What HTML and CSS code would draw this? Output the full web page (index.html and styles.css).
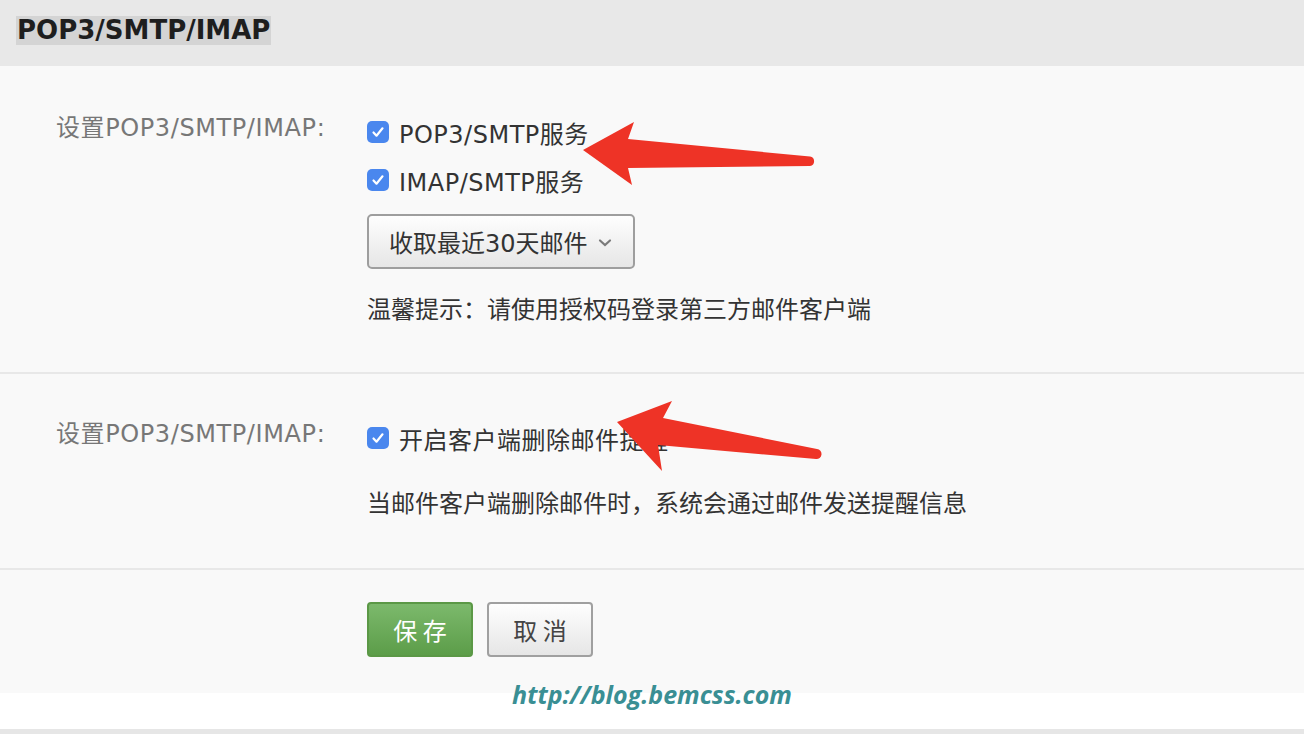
FILE: index.html
```html
<!DOCTYPE html>
<html lang="zh-CN">
<head>
    <meta charset="UTF-8">
    <meta name="viewport" content="width=device-width, initial-scale=1.0">
    <title>POP3/SMTP/IMAP</title>
    <link rel="stylesheet" href="styles.css">
</head>
<body>
    <div class="mail">
        <div class="mail__head">
            <span class="mail__title">POP3/SMTP/IMAP</span>
        </div>

        <div class="mail__panel">
            <div class="mail__section mail__section--first">
                <div class="mail__label">设置POP3/SMTP/IMAP:</div>
                <div class="mail__controls">
                    <label class="mail__check"><span class="mail__box"><svg viewBox="0 0 22 22" width="22" height="22"><path d="M6.5 11.5l3 3.2 6-7.4" fill="none" stroke="#fff" stroke-width="2.2" stroke-linecap="round" stroke-linejoin="round"/></svg></span>POP3/SMTP服务</label>
                    <label class="mail__check"><span class="mail__box"><svg viewBox="0 0 22 22" width="22" height="22"><path d="M6.5 11.5l3 3.2 6-7.4" fill="none" stroke="#fff" stroke-width="2.2" stroke-linecap="round" stroke-linejoin="round"/></svg></span>IMAP/SMTP服务</label>
                    <div class="mail__select">
                        <span>收取最近30天邮件</span>
                        <svg class="mail__chevron" viewBox="0 0 14 10" width="14" height="10"><path d="M2 2.5l5 4.5 5-4.5" fill="none" stroke="#7a7a7a" stroke-width="2.2" stroke-linecap="round"/></svg>
                    </div>
                    <p class="mail__hint">温馨提示：请使用授权码登录第三方邮件客户端</p>
                </div>
            </div>

            <div class="mail__section mail__section--second">
                <div class="mail__label">设置POP3/SMTP/IMAP:</div>
                <div class="mail__controls">
                    <label class="mail__check"><span class="mail__box"><svg viewBox="0 0 22 22" width="22" height="22"><path d="M6.5 11.5l3 3.2 6-7.4" fill="none" stroke="#fff" stroke-width="2.2" stroke-linecap="round" stroke-linejoin="round"/></svg></span>开启客户端删除邮件提醒</label>
                    <p class="mail__hint mail__hint--spaced">当邮件客户端删除邮件时，系统会通过邮件发送提醒信息</p>
                </div>
            </div>

            <div class="mail__section mail__section--actions">
                <div class="mail__label"></div>
                <div class="mail__buttons">
                    <button class="mail__btn mail__btn--save">保 存</button>
                    <button class="mail__btn mail__btn--cancel">取 消</button>
                </div>
            </div>
        </div>

        <div class="mail__foot"></div>

        <div class="mail__mark">http://blog.bemcss.com</div>

        <svg class="mail__arrows" viewBox="0 0 1304 734" width="1304" height="734">
            <path d="M583 150 L634 122 L628 139 L810 156.5 A4.8 4.8 0 0 1 810 166 L628 168 L632 185 Z" fill="#ee3326"/>
            <path d="M617 422 L672 401 L663 418 L817 449 A5 5 0 0 1 816 459 L658 445 L662 471 Z" fill="#ee3326"/>
        </svg>
    </div>
</body>
</html>
```

FILE: styles.css
```css
body {
    margin: 0;
    background: #fff;
    font-family: "DejaVu Sans", "Noto Sans CJK SC", sans-serif;
}
.mail {
    position: relative;
    width: 1304px;
    height: 734px;
    overflow: hidden;
}
.mail__head {
    height: 66px;
    background: #e8e8e8;
    padding: 16px 0 0 16px;
    box-sizing: border-box;
}
.mail__title {
    display: inline-block;
    background: #d4d4d4;
    color: #1e1e1e;
    font-weight: bold;
    font-size: 26px;
    line-height: 29px;
    padding: 0 1px;
}
.mail__panel {
    background: #f9f9f9;
}
.mail__section {
    display: flex;
    border-bottom: 2px solid #e8e8e8;
}
.mail__section--first {
    padding: 42px 0 0;
    height: 308px;
    box-sizing: border-box;
}
.mail__section--second {
    padding: 40px 0 0;
    height: 196px;
    box-sizing: border-box;
}
.mail__section--actions {
    border-bottom: 0;
    padding: 32px 0 36px;
}
.mail__label {
    width: 367px;
    padding-left: 56px;
    box-sizing: border-box;
    flex-shrink: 0;
    color: #777;
    font-size: 24px;
    line-height: 40px;
    letter-spacing: 0.6px;
}
.mail__controls {
    display: flex;
    flex-direction: column;
    align-items: flex-start;
}
.mail__check {
    display: flex;
    align-items: center;
    gap: 10px;
    height: 48px;
    color: #333;
    font-size: 24px;
    letter-spacing: 0.5px;
}
.mail__box {
    width: 22px;
    height: 22px;
    border-radius: 5px;
    background: #4a87ee;
    display: flex;
}
.mail__select {
    margin-top: 10px;
    width: 268px;
    height: 55px;
    box-sizing: border-box;
    border: 2px solid #9e9e9e;
    border-radius: 5px;
    background: linear-gradient(#fefefe, #e6e6e6);
    display: flex;
    align-items: center;
    padding: 0 21px 0 20px;
    justify-content: space-between;
    color: #333;
    font-size: 24px;
}
.mail__chevron {
    margin-top: 2px;
}
.mail__hint {
    margin: 27px 0 0;
    color: #333;
    font-size: 24px;
    line-height: 28px;
}
.mail__hint--spaced {
    margin-top: 28px;
}
.mail__buttons {
    display: flex;
    gap: 14px;
}
.mail__btn {
    width: 106px;
    height: 55px;
    border-radius: 4px;
    font-family: "Noto Sans CJK SC", sans-serif;
    font-size: 24px;
    cursor: pointer;
}
.mail__btn--save {
    background: linear-gradient(#7cb96c, #5c9d49);
    border: 2px solid #5b9846;
    color: #fff;
}
.mail__btn--cancel {
    background: linear-gradient(#fefefe, #e6e6e6);
    border: 2px solid #a0a0a0;
    color: #444;
}
.mail__foot {
    height: 36px;
    border-bottom: 5px solid #e6e6e6;
}
.mail__mark {
    position: absolute;
    left: 0;
    right: 0;
    top: 677px;
    text-align: center;
    font-family: "Open Sans", sans-serif;
    font-style: italic;
    font-weight: bold;
    font-size: 25px;
    color: #3a8f94;
}
.mail__arrows {
    position: absolute;
    left: 0;
    top: 0;
    pointer-events: none;
}
```
